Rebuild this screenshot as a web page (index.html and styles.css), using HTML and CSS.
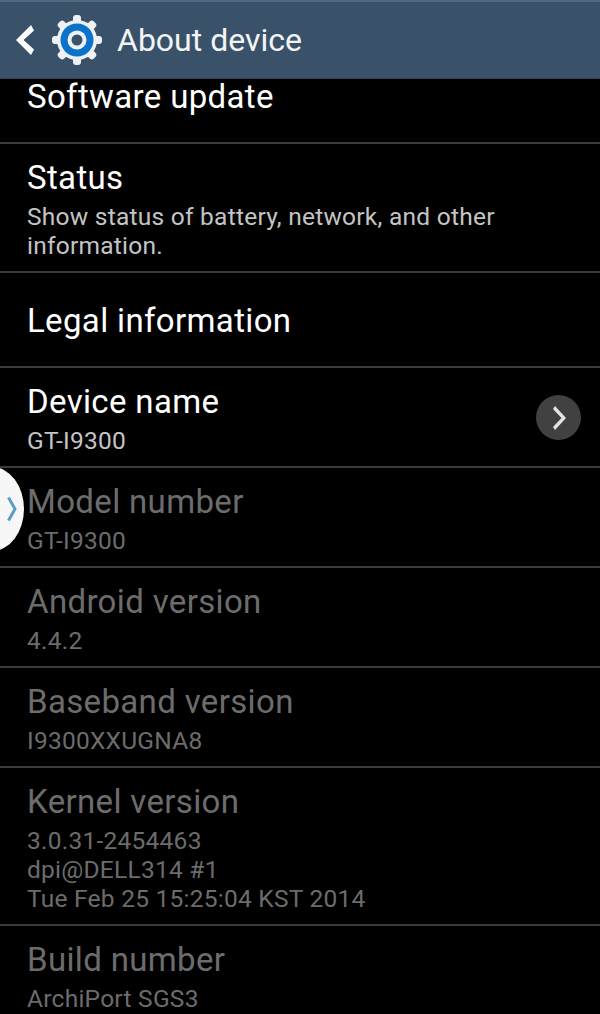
FILE: index.html
```html
<!DOCTYPE html>
<html lang="en">
<head>
    <meta charset="UTF-8">
    <meta name="viewport" content="width=device-width, initial-scale=1.0">
    <title>About device</title>
    <link rel="stylesheet" href="styles.css">
</head>
<body>
    <div class="action-bar">
        <svg class="back-icon" width="20" height="32" viewBox="0 0 20 32">
            <polygon points="16,1 19,6.500 8.500,16 19,25.500 16,31 1,16" fill="#fff"/>
        </svg>
        <svg class="gear-icon" width="52" height="52" viewBox="0 0 52 52">
            <g fill="#eef1f3">
                <circle cx="26" cy="26" r="20"/>
                <rect x="22" y="1" width="8" height="50" rx="3"/>
                <rect x="22" y="1" width="8" height="50" rx="3" transform="rotate(45 26 26)"/>
                <rect x="22" y="1" width="8" height="50" rx="3" transform="rotate(90 26 26)"/>
                <rect x="22" y="1" width="8" height="50" rx="3" transform="rotate(135 26 26)"/>
            </g>
            <circle cx="26" cy="26" r="16.500" fill="#0b72c9"/>
            <circle cx="26" cy="26" r="9.500" fill="#eef1f3"/>
            <circle cx="26" cy="26" r="5.500" fill="#3a5269"/>
        </svg>
        <span class="bar-title">About device</span>
    </div>

    <div class="list">
        <div class="row row-first">
            <div class="row-title">Software update</div>
        </div>
        <div class="row row-status">
            <div class="row-title">Status</div>
            <div class="row-sub">Show status of battery, network, and other<br>information.</div>
        </div>
        <div class="row row-legal">
            <div class="row-title">Legal information</div>
        </div>
        <div class="row row-device">
            <div class="row-title">Device name</div>
            <div class="row-sub">GT-I9300</div>
            <div class="more-btn">
                <svg width="16" height="26" viewBox="0 0 16 26">
                    <polygon points="4,1 15,13 4,25 2,22 10.500,13 2,4" fill="#e4e4e4"/>
                </svg>
            </div>
        </div>
        <div class="row dim">
            <div class="row-title">Model number</div>
            <div class="row-sub">GT-I9300</div>
        </div>
        <div class="row dim">
            <div class="row-title">Android version</div>
            <div class="row-sub">4.4.2</div>
        </div>
        <div class="row dim">
            <div class="row-title">Baseband version</div>
            <div class="row-sub">I9300XXUGNA8</div>
        </div>
        <div class="row dim">
            <div class="row-title">Kernel version</div>
            <div class="row-sub">3.0.31-2454463<br>dpi@DELL314 #1<br>Tue Feb 25 15:25:04 KST 2014</div>
        </div>
        <div class="row dim row-last">
            <div class="row-title">Build number</div>
            <div class="row-sub">ArchiPort SGS3</div>
        </div>
    </div>

    <div class="side-handle">
        <svg width="10" height="26" viewBox="0 0 10 26">
            <path d="M1.500 1.500 L8 13 L1.500 24.500" fill="none" stroke="#5a9ec4" stroke-width="3"/>
        </svg>
    </div>
</body>
</html>
```

FILE: styles.css
```css
html, body {
    margin: 0;
    padding: 0;
}

body {
    position: relative;
    width: 600px;
    height: 1014px;
    overflow: hidden;
    background: #000;
    color: #fff;
    font-family: Roboto, sans-serif;
}

.action-bar {
    display: flex;
    align-items: center;
    height: 79px;
    box-sizing: border-box;
    border-top: 2px solid #51697e;
    border-bottom: 1px solid #2f4556;
    background: #3a5269;
}

.back-icon {
    margin-left: 15px;
}

.gear-icon {
    margin-left: 16px;
}

.bar-title {
    margin-left: 14px;
    font-size: 32px;
    color: #f2f4f5;
}

.row {
    position: relative;
    box-sizing: border-box;
    height: 100px;
    padding: 15px 27px 0;
    border-bottom: 2px solid #3a3a3a;
}

.row-title {
    font-size: 33px;
    line-height: 38px;
    letter-spacing: 0.350px;
}

.row-sub {
    margin-top: 5px;
    font-size: 24.500px;
    line-height: 29px;
    letter-spacing: 0.250px;
    color: #c4c4c4;
}

.row-first {
    height: 65px;
    padding-top: 0;
}

.row-first .row-title {
    line-height: 36px;
}

.row-status {
    height: 129px;
}

.row-legal {
    height: 95px;
    padding-top: 29px;
}

.dim .row-title,
.dim .row-sub {
    color: #6c6c6c;
}

.dim:nth-last-child(2) {
    height: 158px;
}

.row-last {
    border-bottom: none;
}

.more-btn {
    position: absolute;
    right: 19px;
    top: 27px;
    display: flex;
    align-items: center;
    justify-content: center;
    width: 45px;
    height: 45px;
    border-radius: 50%;
    background: #414141;
}

.side-handle {
    position: absolute;
    left: -40px;
    top: 467px;
    display: flex;
    align-items: center;
    justify-content: flex-end;
    box-sizing: border-box;
    width: 64px;
    height: 84px;
    padding-right: 7px;
    border-radius: 50%;
    background: #f7f7f7;
}
```
